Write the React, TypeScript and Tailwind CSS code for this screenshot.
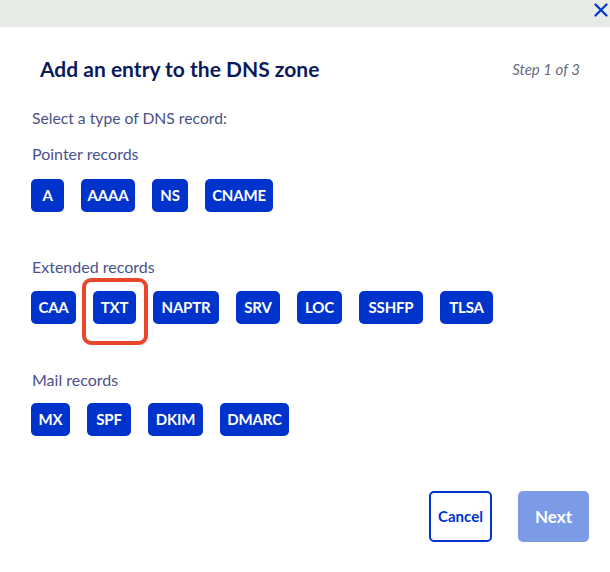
import React from "react";

const font = { fontFamily: "Lato, 'Noto Sans', sans-serif" };

type Item = [string, number];

function Rec({ label, w }: { label: string; w: number }) {
  return (
    <span
      className="flex h-[33px] items-center justify-center rounded-[5px] bg-[#0033cc] text-[15px] font-bold tracking-[-0.2px] text-white"
      style={{ width: w }}
    >
      {label}
    </span>
  );
}

function Row({ items, highlight }: { items: Item[]; highlight?: string }) {
  return (
    <div className="flex gap-[17px]">
      {items.map(([it, w]) =>
        it === highlight ? (
          <span key={it} className="relative">
            <Rec label={it} w={w} />
            <span className="absolute -left-[11px] -right-[12px] -top-[13px] -bottom-[21px] rounded-[9px] border-[4px] border-[#e8472c]" />
          </span>
        ) : (
          <Rec key={it} label={it} w={w} />
        )
      )}
    </div>
  );
}

export default function App() {
  return (
    <div className="h-[572px] w-[610px] bg-white" style={font}>
      <div className="flex h-[27px] items-start justify-end bg-[#e7ebe6] pr-[2px] pt-[3px]">
        <svg width="14" height="14" viewBox="0 0 14 14">
          <path d="M1.5 1.5 L12.5 12.5 M12.5 1.5 L1.5 12.5" stroke="#0033cc" strokeWidth="2.2" strokeLinecap="round" />
        </svg>
      </div>
      <div className="flex items-center justify-between pl-[40px] pr-[30px] pt-[28px]">
        <h1 className="text-[21px] font-bold leading-[28px] text-[#0b1a5c]">Add an entry to the DNS zone</h1>
        <span className="text-[15px] italic text-[#656a80]">Step 1 of 3</span>
      </div>
      <div className="pl-[31px]">
        <p className="ml-[1px] mt-[25px] text-[15.7px] leading-[20px] text-[#4a5189]">Select a type of DNS record:</p>
        <p className="ml-[1px] mt-[15px] text-[16px] leading-[22px] text-[#4a5189]">Pointer records</p>
        <div className="mt-[14px]">
          <Row items={[["A", 33], ["AAAA", 54], ["NS", 36], ["CNAME", 68]]} />
        </div>
        <p className="ml-[1px] mt-[44px] text-[16px] leading-[22px] text-[#4a5189]">Extended records</p>
        <div className="mt-[13px]">
          <Row
            items={[["CAA", 45], ["TXT", 43], ["NAPTR", 66], ["SRV", 44], ["LOC", 45], ["SSHFP", 64], ["TLSA", 53]]}
            highlight="TXT"
          />
        </div>
        <p className="ml-[1px] mt-[45px] text-[16px] leading-[22px] text-[#4a5189]">Mail records</p>
        <div className="mt-[12px]">
          <Row items={[["MX", 39], ["SPF", 44], ["DKIM", 55], ["DMARC", 69]]} />
        </div>
      </div>
      <div className="mt-[55px] flex justify-end gap-[26px] pr-[21px]">
        <button className="h-[51px] w-[63px] rounded-[5px] border-2 border-[#0033cc] bg-white text-[15px] font-bold text-[#0033cc]">
          Cancel
        </button>
        <button className="h-[51px] w-[71px] rounded-[5px] bg-[#7b9be6] text-[17px] font-bold text-white">
          Next
        </button>
      </div>
    </div>
  );
}
